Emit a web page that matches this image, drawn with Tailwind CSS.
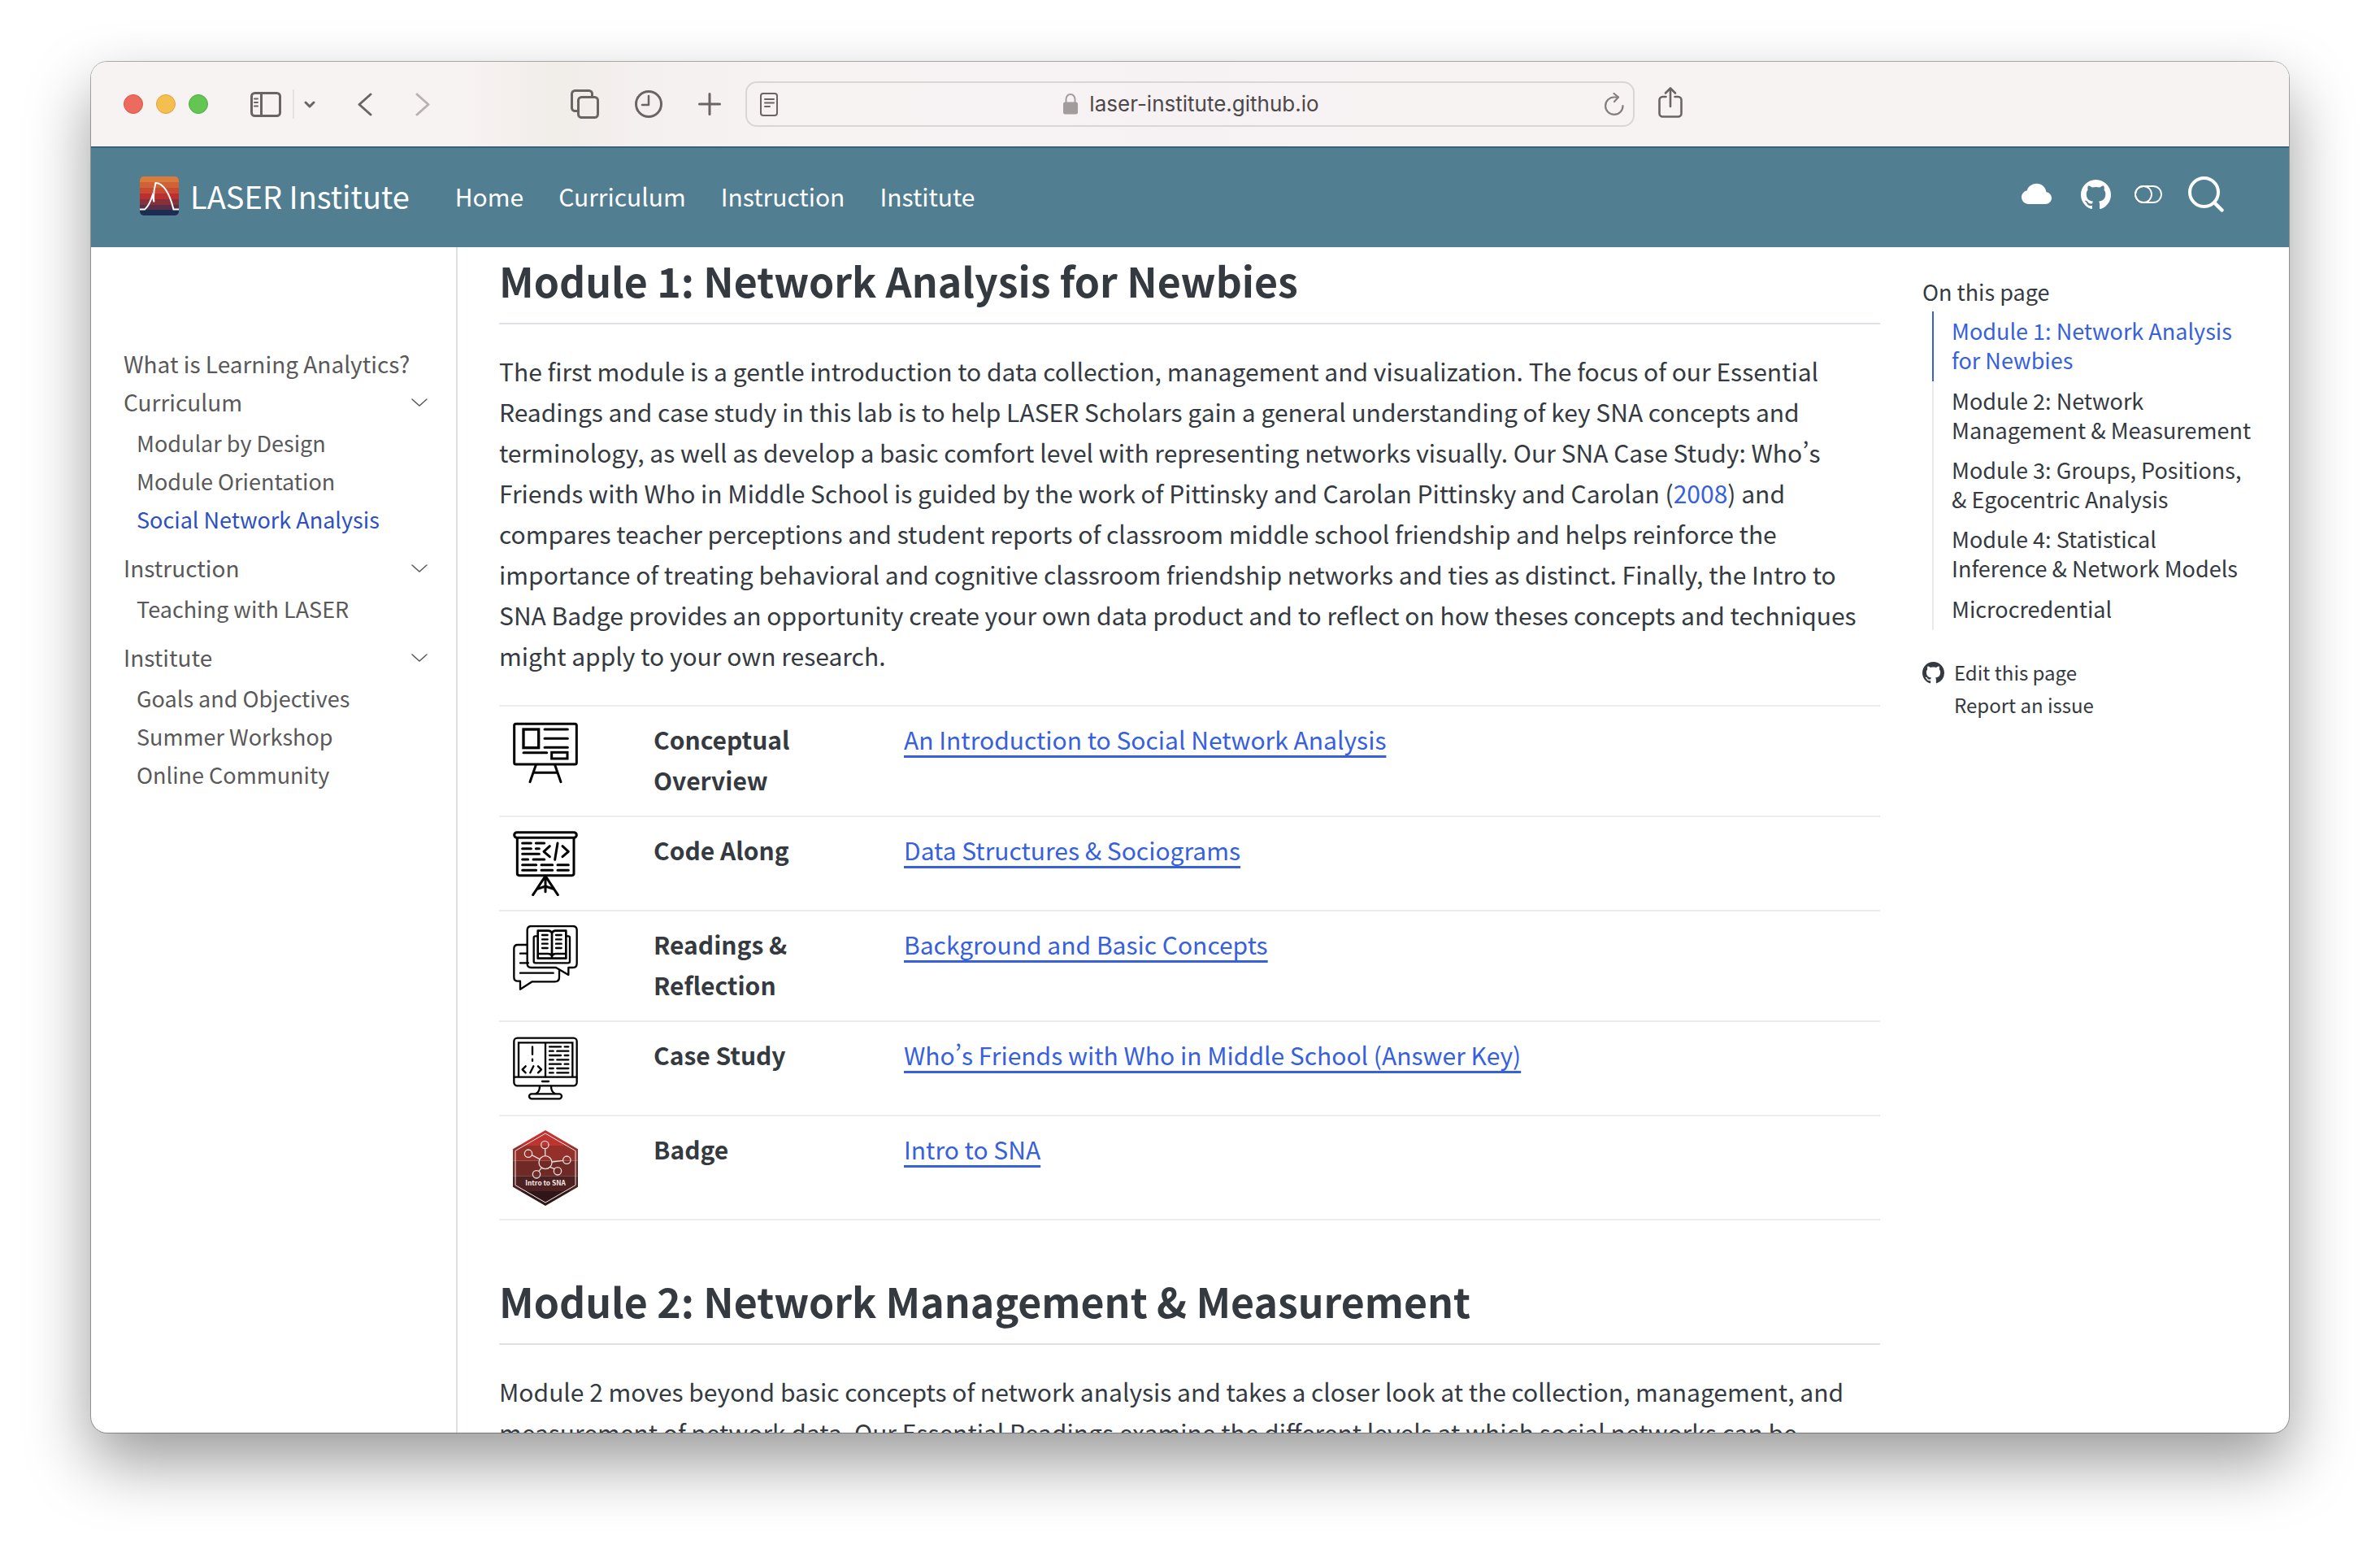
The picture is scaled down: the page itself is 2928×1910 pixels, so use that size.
<!DOCTYPE html>
<html lang="en">
<head>
<meta charset="utf-8">
<title>LASER Institute</title>
<script src="https://cdn.jsdelivr.net/npm/@tailwindcss/browser@4"></script>
</head>
<body class="bg-white font-['Noto_Sans_CJK_SC','Noto_Sans',sans-serif] text-[#343a40] [font-feature-settings:'pwid']">
<div class="flex h-screen flex-col px-28 pt-19 pb-37">
<div class="flex min-h-0 flex-1 flex-col overflow-hidden rounded-[20px] bg-white shadow-[0_0_0_1px_rgba(0,0,0,0.3),0_36px_80px_rgba(0,0,0,0.4)]">

  <!-- Browser toolbar -->
  <div class="grid h-26 shrink-0 grid-cols-[1fr_1094px_1fr] items-center bg-[#f8f3f3] bg-[linear-gradient(90deg,#f8f3f3_17%,#f1ede9_21%,#f1ede9_22%,#f5f0f0_25%,#f8f3f3_32%,#f6f1f3_50%,#f8f3f3_60%)] text-[#6b6464]">
    <div class="flex items-center justify-between pr-[30px] pl-10">
      <div class="flex items-center">
        <div class="flex gap-4">
          <button aria-label="Close" class="size-6 rounded-full border border-[#d9554b] bg-[#ed6a5e]"></button>
          <button aria-label="Minimize" class="size-6 rounded-full border border-[#dba53c] bg-[#f5bf4f]"></button>
          <button aria-label="Zoom" class="size-6 rounded-full border border-[#53ab44] bg-[#62c554]"></button>
        </div>
        <button aria-label="Sidebar" class="ml-[52px]"><svg class="block h-[31px] w-[38px]" viewBox="0 0 38 31" fill="none" stroke="currentColor" stroke-width="3"><rect x="1.5" y="1.5" width="35" height="28" rx="4"/><path d="M13.5 2v27"/><path d="M5 8.500h4M5 13h4M5 17.500h4" stroke-width="2" stroke-linecap="round"/></svg></button>
        <div class="ml-[14px] h-9 w-[2px] bg-[#e6e0e0]"></div>
        <button aria-label="Tab groups" class="ml-3"><svg class="block h-[9px] w-[14px]" viewBox="0 0 14 9" fill="none" stroke="currentColor" stroke-width="3" stroke-linecap="round" stroke-linejoin="round"><path d="M2 2l5 5 5-5"/></svg></button>
        <button aria-label="Back" class="ml-[52px]"><svg class="block h-[29px] w-[18px]" viewBox="0 0 18 29" fill="none" stroke="currentColor" stroke-width="3" stroke-linecap="round" stroke-linejoin="round"><path d="M16 2L2 14.500 16 27"/></svg></button>
        <button aria-label="Forward" class="ml-[53px] text-[#b9b2b2]"><svg class="block h-[29px] w-[18px]" viewBox="0 0 18 29" fill="none" stroke="currentColor" stroke-width="3" stroke-linecap="round" stroke-linejoin="round"><path d="M2 2l14 12.500L2 27"/></svg></button>
      </div>
      <div class="flex items-center gap-11">
        <button aria-label="Tab overview"><svg class="block h-9 w-[35px]" viewBox="0 0 35 36" fill="none" stroke="currentColor" stroke-width="3"><path d="M9 26.500H5.500a4 4 0 0 1-4-4v-17a4 4 0 0 1 4-4h17a4 4 0 0 1 4 4V9"/><rect x="9.500" y="9.500" width="24" height="25" rx="4"/></svg></button>
        <button aria-label="History"><svg class="block h-[34px] w-[34px]" viewBox="0 0 34 34" fill="none" stroke="currentColor" stroke-width="3" stroke-linecap="round" stroke-linejoin="round"><circle cx="17" cy="17" r="15.500"/><path d="M17 7v11H9" stroke-width="2.500"/></svg></button>
        <button aria-label="New tab"><svg class="block size-7" viewBox="0 0 28 28" fill="none" stroke="currentColor" stroke-width="3" stroke-linecap="round"><path d="M14 1.500v25M1.500 14h25"/></svg></button>
      </div>
    </div>
    <div class="flex h-14 items-center rounded-[14px] border-2 border-[#dbd5d5] pr-[11px] pl-4">
      <svg class="h-[29px] w-[22px]" viewBox="0 0 22 29" fill="none" stroke="currentColor" stroke-width="2"><rect x="1" y="1" width="20" height="27" rx="3"/><path d="M6 8h11M6 12.500h11M6 17h6" stroke-linecap="round"/></svg>
      <div class="flex flex-1 items-center justify-center gap-[14px]">
        <svg class="h-[26px] w-[18px]" viewBox="0 0 18 26" fill="none"><rect y="10.500" width="18" height="15" rx="2.500" fill="#a29c9d"/><path d="M3.500 11V7a5.500 6 0 0 1 11 0v4" stroke="#a29c9d" stroke-width="2"/></svg>
        <span class="font-[Inter,sans-serif] text-[26px] leading-9 text-[#4c4749]">laser-institute.github.io</span>
      </div>
      <button aria-label="Reload"><svg class="block h-7 w-6" viewBox="0 0 24 28" fill="none" stroke="#857e7f" stroke-width="2.200" stroke-linecap="round" stroke-linejoin="round"><path d="M22.500 16A10.700 10.700 0 1 1 12 5.500h5"/><path d="M11.500 1l5.500 4.500-5 5.500"/></svg></button>
    </div>
    <div class="flex pb-1 pl-[29px]">
      <button aria-label="Share"><svg class="block h-[38px] w-[30px]" viewBox="0 0 30 38" fill="none" stroke="currentColor" stroke-width="3" stroke-linecap="round" stroke-linejoin="round"><path d="M9.500 12H5.500a4 4 0 0 0-4 4v16.500a4 4 0 0 0 4 4h19a4 4 0 0 0 4-4V16a4 4 0 0 0-4-4h-4M15 24V2M9 7.500l6-6 6 6" stroke-width="2.600"/></svg></button>
    </div>
  </div>

  <!-- Site navigation -->
  <header class="flex h-31 shrink-0 items-center border-t-2 border-[#35647a] bg-[#517e91] pr-20 pb-1 pl-15 text-white">
    <a href="#" class="flex items-center gap-[14px]">
      <svg class="size-12" viewBox="0 0 48 48"><defs><clipPath id="lg"><rect width="48" height="48" rx="5"/></clipPath></defs><g clip-path="url(#lg)"><path fill="#d97b3c" d="M0 0h48v7H0z"/><path fill="#cf6237" d="M0 7h48v7H0z"/><path fill="#c64b32" d="M0 14h48v7H0z"/><path fill="#b9302e" d="M0 21h48v7H0z"/><path fill="#85303a" d="M0 28h48v7H0z"/><path fill="#573047" d="M0 35h48v6H0z"/><path fill="#1c2c52" d="M0 41h48v7H0z"/></g><path d="M0 40.500h6c5-4 7-9 9.500-17l2 8C16 20 18 14 19.500 8c9 0 17 12 22 32.500H48" fill="none" stroke="#fff" stroke-width="2"/></svg>
      <span class="text-[38px] leading-[60px]">LASER Institute</span>
    </a>
    <nav class="ml-14 flex gap-[43px] text-[30px] leading-[50px]">
      <a href="#">Home</a><a href="#">Curriculum</a><a href="#">Instruction</a><a href="#">Institute</a>
    </nav>
    <div class="ml-auto flex items-center pb-1">
      <a href="#" aria-label="Cloud"><svg class="block size-[37px]" viewBox="0 0 16 16" fill="#fff"><path d="M4.406 3.342A5.530 5.530 0 0 1 8 2c2.690 0 4.923 2 5.166 4.579C14.758 6.804 16 8.137 16 9.773 16 11.569 14.502 13 12.687 13H3.781C1.708 13 0 11.366 0 9.318c0-1.763 1.266-3.223 2.942-3.593.143-.863.698-1.723 1.464-2.383z"/></svg></a>
      <a href="#" aria-label="GitHub" class="ml-9"><svg class="block size-[37px]" viewBox="0 0 16 16" fill="#fff"><path d="M8 0C3.580 0 0 3.580 0 8c0 3.540 2.290 6.530 5.470 7.590.4.070.55-.17.55-.38 0-.19-.01-.82-.01-1.490-2.010.37-2.530-.49-2.690-.94-.09-.23-.48-.94-.82-1.130-.28-.15-.68-.52-.01-.53.63-.01 1.080.58 1.230.82.720 1.210 1.870.87 2.330.66.070-.52.28-.87.510-1.070-1.780-.2-3.640-.89-3.640-3.950 0-.87.31-1.590.82-2.150-.08-.2-.36-1.020.080-2.120 0 0 .67-.21 2.200.82.640-.18 1.320-.27 2-.27s1.360.09 2 .27c1.530-1.040 2.200-.82 2.200-.82.440 1.100.16 1.920.080 2.120.51.560.82 1.270.82 2.150 0 3.070-1.870 3.750-3.650 3.950.29.25.54.73.54 1.480 0 1.070-.01 1.930-.01 2.200 0 .21.15.46.55.38A8.010 8.010 0 0 0 16 8c0-4.420-3.580-8-8-8"/></svg></a>
      <button aria-label="Toggle dark mode" class="ml-[29px]"><svg class="block h-[22px] w-[34px]" viewBox="0 0 34 22" fill="none" stroke="#fff" stroke-width="1.800"><rect x="1" y="1" width="32" height="20" rx="10"/><circle cx="11" cy="11" r="10"/></svg></button>
      <button aria-label="Search" class="ml-8"><svg class="block size-11" viewBox="0 0 44 44" fill="none" stroke="#fff" stroke-linecap="round"><circle cx="19.500" cy="19.500" r="17.500" stroke-width="4"/><path d="M32.500 32.500l9 9" stroke-width="4.500"/></svg></button>
    </div>
  </header>

  <div class="flex min-h-0 flex-1 overflow-hidden">
    <!-- Section navigation -->
    <nav class="w-[451px] shrink-0 border-r-2 border-[#dee2e6] pt-30 pr-[35px] pl-10 text-[28px] leading-[47px] text-[#595959]">
      <a href="#" class="block">What is Learning Analytics?</a>
      <div class="flex items-center justify-between"><a href="#">Curriculum</a><button aria-label="Toggle Curriculum"><svg class="block h-3 w-5" viewBox="0 0 20 12" fill="none" stroke="#595959" stroke-width="1.500" stroke-linecap="round"><path d="M1 2l9 8 9-8"/></svg></button></div>
      <ul class="pt-[3px] pb-[13px] pl-4 text-[27px]">
        <li><a href="#">Modular by Design</a></li>
        <li><a href="#">Module Orientation</a></li>
        <li><a href="#" class="text-[#2c50c0]">Social Network Analysis</a></li>
      </ul>
      <div class="flex items-center justify-between"><a href="#">Instruction</a><button aria-label="Toggle Instruction"><svg class="block h-3 w-5" viewBox="0 0 20 12" fill="none" stroke="#595959" stroke-width="1.500" stroke-linecap="round"><path d="M1 2l9 8 9-8"/></svg></button></div>
      <ul class="pt-[3px] pb-[13px] pl-4 text-[27px]">
        <li><a href="#">Teaching with LASER</a></li>
      </ul>
      <div class="flex items-center justify-between"><a href="#">Institute</a><button aria-label="Toggle Institute"><svg class="block h-3 w-5" viewBox="0 0 20 12" fill="none" stroke="#595959" stroke-width="1.500" stroke-linecap="round"><path d="M1 2l9 8 9-8"/></svg></button></div>
      <ul class="pt-[3px] pb-[13px] pl-4 text-[27px]">
        <li><a href="#">Goals and Objectives</a></li>
        <li><a href="#">Summer Workshop</a></li>
        <li><a href="#">Online Community</a></li>
      </ul>
    </nav>

    <!-- Article -->
    <main class="min-w-0 flex-1 pl-[51px] text-[30px] leading-[50px]">
      <h2 class="border-b-2 border-[#dee2e6] pt-[5px] pb-[18px] text-[50px] leading-[70px] font-bold">Module 1: Network Analysis for Newbies</h2>
      <p class="pt-8">The first module is a gentle introduction to data collection, management and visualization. The focus of our Essential Readings and case study in this lab is to help LASER Scholars gain a general understanding of key SNA concepts and terminology, as well as develop a basic comfort level with representing networks visually. Our SNA Case Study: Who’s Friends with Who in Middle School is guided by the work of Pittinsky and Carolan Pittinsky and Carolan (<a href="#" class="text-[#3760dd]">2008</a>) and compares teacher perceptions and student reports of classroom middle school friendship and helps reinforce the importance of treating behavioral and cognitive classroom friendship networks and ties as distinct. Finally, the Intro to SNA Badge provides an opportunity create your own data product and to reflect on how theses concepts and techniques might apply to your own research.</p>
      <table class="mt-9 w-full table-fixed border-collapse border-t-2 border-[#ececee]">
        <colgroup><col class="w-[173px]"><col class="w-[308px]"><col></colgroup>
        <tbody class="align-top">
          <tr class="border-b-2 border-[#ececee]">
            <td class="py-[17px] pl-[17px]"><svg class="block size-20" viewBox="93 78 240 240" fill="none" stroke="#000" stroke-width="9" stroke-linecap="round" stroke-linejoin="round"><rect x="98" y="91" width="230" height="149" rx="6"/><rect x="132" y="111" width="56" height="68" stroke-width="10" stroke-linejoin="miter"/><path d="M210 111h85M210 145h85M210 178h85M132 197h86"/><rect x="236" y="196" width="58" height="23" stroke-linejoin="miter"/><path d="M178 242l-22 63M248 242l22 63M170 271h88"/></svg></td>
            <th scope="row" class="px-[17px] pt-[15px] pb-[19px] text-left font-bold">Conceptual Overview</th>
            <td class="px-[17px] pt-[15px]"><a href="#" class="text-[#3760dd] underline decoration-3 underline-offset-[7px]">An Introduction to Social Network Analysis</a></td>
          </tr>
          <tr class="border-b-2 border-[#ececee]">
            <td class="py-[17px] pl-[17px]"><svg class="block size-20" viewBox="93 486 240 240" fill="none" stroke="#000" stroke-width="9" stroke-linecap="round" stroke-linejoin="round"><rect x="98" y="491" width="230" height="20" rx="10"/><path d="M109 512v131q0 7 7 7h195q7 0 7-7V512"/><path d="M128 531h32M178 531h31M128 551h32M178 551h12M128 571h62M128 591h21M168 591h41M128 611h51M198 611h41M258 611h40M128 631h51M198 631h41M258 631h40M229 542l-22 20 22 19M258 531l-10 61M276 542l22 20-22 19"/><path d="M213 653v57M211 655l-44 67M215 655l44 67M183 700l30-10 30 10"/></svg></td>
            <th scope="row" class="px-[17px] pt-[15px] text-left font-bold">Code Along</th>
            <td class="px-[17px] pt-[15px]"><a href="#" class="text-[#3760dd] underline decoration-3 underline-offset-[7px]">Data Structures &amp; Sociograms</a></td>
          </tr>
          <tr class="border-b-2 border-[#ececee]">
            <td class="py-[17px] pl-[17px]"><svg class="block size-20" viewBox="93 834 240 240" fill="none" stroke="#000" stroke-width="7" stroke-linecap="round" stroke-linejoin="round"><path d="M145 906h-34q-14 0-14 14v106q0 14 14 14h9v30l44-28h84q16 0 16-16v-24M120 938h25M120 973h30M120 1010h122"/><path d="M252 990h-92q-14 0-14-14V852q0-15 15-15h153q15 0 15 15v122q0 16-15 16h-16v27l-46-27z"/><path d="M182 874h-6q-6 0-6 6v87q0 6 6 6h121q6 0 6-6v-87q0-6-6-6h-6"/><path d="M237 862q-4-8-14-8h-38v102h104V854h-38q-10 0-14 8v78M185 939h38q10 0 14 8 4-8 14-8h38M237 947v8" stroke-width="8"/><path d="M201 870h20M201 886h20M201 902h20M201 918h20M252 870h20M252 886h20M252 902h20M252 918h20"/></svg></td>
            <th scope="row" class="px-[17px] pt-[15px] pb-[19px] text-left font-bold">Readings &amp; Reflection</th>
            <td class="px-[17px] pt-[15px]"><a href="#" class="text-[#3760dd] underline decoration-3 underline-offset-[7px]">Background and Basic Concepts</a></td>
          </tr>
          <tr class="border-b-2 border-[#ececee]">
            <td class="py-[17px] pl-[17px]"><svg class="block size-20" viewBox="93 282 240 240" fill="none" stroke="#000" stroke-width="7" stroke-linecap="round" stroke-linejoin="round"><rect x="97" y="290" width="232" height="176" rx="12"/><path d="M98 434h230M201 450h24"/><path d="M114 432V307h199v125M213 308v125" stroke-linejoin="miter"/><path d="M165 322v28M165 368v6M140 394l-12 12 12 12M169 394l-12 24M186 394l12 12-12 12"/><path d="M228 322h42M284 322h14M228 338h14M256 338h42M228 354h42M284 354h14M228 370h14M256 370h42M228 386h42M284 386h14M228 402h14M256 402h42M228 418h14M256 418h42"/><path d="M192 468q0 20-14 27M234 468q0 20 14 27"/><rect x="153" y="496" width="120" height="18" rx="9"/></svg></td>
            <th scope="row" class="px-[17px] pt-[15px] text-left font-bold">Case Study</th>
            <td class="px-[17px] pt-[15px]"><a href="#" class="text-[#3760dd] underline decoration-3 underline-offset-[7px]">Who’s Friends with Who in Middle School (Answer Key)</a></td>
          </tr>
          <tr class="border-b-2 border-[#ececee]">
            <td class="pt-[17px] pb-4 pl-[17px]"><svg class="block h-[93px] w-20" viewBox="93 630 240 279"><defs><clipPath id="hex"><path d="M213 630l120 70v139l-120 70-120-70V700z"/></clipPath></defs><g clip-path="url(#hex)"><path fill="#bf3331" d="M93 630h240v57H93z"/><path fill="#933029" d="M93 687h240v56H93z"/><path fill="#6f2a26" d="M93 743h240v56H93z"/><path fill="#4d2021" d="M93 799h240v56H93z"/><path fill="#2f1719" d="M93 855h240v54H93z"/></g><path d="M213 642l111 64v127l-111 64-111-64V706z" fill="none" stroke="#f5e9e8" stroke-width="3"/><g fill="none" stroke="#f0dedd" stroke-width="4"><circle cx="213" cy="749" r="24"/><circle cx="211" cy="684" r="14"/><circle cx="150" cy="716" r="14"/><circle cx="292" cy="740" r="14"/><circle cx="258" cy="781" r="14"/><circle cx="180" cy="793" r="14"/><path d="M212 698v27M163 722l29 15M237 747l41-5M230 766l17 7M199 769l-11 13"/></g><text x="213" y="834" text-anchor="middle" font-size="25" font-weight="700" fill="#f5e9e8" font-family="Noto Sans CJK SC, sans-serif">Intro to SNA</text></svg></td>
            <th scope="row" class="px-[17px] pt-[15px] text-left font-bold">Badge</th>
            <td class="px-[17px] pt-[15px]"><a href="#" class="text-[#3760dd] underline decoration-3 underline-offset-[7px]">Intro to SNA</a></td>
          </tr>
        </tbody>
      </table>
      <h2 class="mt-[63px] border-b-2 border-[#dee2e6] pb-[18px] text-[50px] leading-[70px] font-bold">Module 2: Network Management &amp; Measurement</h2>
      <p class="pt-8">Module 2 moves beyond basic concepts of network analysis and takes a closer look at the collection, management, and measurement of network data. Our Essential Readings examine the different levels at which social networks can be</p>
    </main>

    <!-- Table of contents -->
    <aside class="w-[503px] shrink-0 pt-[37px] pl-[52px] text-[27px] leading-9">
      <h2>On this page</h2>
      <ul class="ml-3 w-[396px] pt-[6px]">
        <li class="border-l-2 border-[#3760dd] pt-[6px] pb-2 pl-[22px] text-[#3760dd]"><a href="#">Module 1: Network Analysis for Newbies</a></li>
        <li class="border-l-2 border-[#e9eaf0] pt-[6px] pb-2 pl-[22px]"><a href="#">Module 2: Network Management &amp; Measurement</a></li>
        <li class="border-l-2 border-[#e9eaf0] pt-[5px] pb-2 pl-[22px]"><a href="#">Module 3: Groups, Positions, &amp; Egocentric Analysis</a></li>
        <li class="border-l-2 border-[#e9eaf0] pt-[5px] pb-2 pl-[22px]"><a href="#">Module 4: Statistical Inference &amp; Network Models</a></li>
        <li class="border-l-2 border-[#e9eaf0] pt-[6px] pb-2 pl-[22px]"><a href="#">Microcredential</a></li>
      </ul>
      <ul class="pt-8 text-[24px] leading-10">
        <li><a href="#" class="flex items-center gap-3"><svg class="block size-[27px]" viewBox="0 0 16 16" fill="#343a40"><path d="M8 0C3.580 0 0 3.580 0 8c0 3.540 2.290 6.530 5.470 7.590.4.070.55-.17.55-.38 0-.19-.01-.82-.01-1.490-2.010.37-2.530-.49-2.690-.94-.09-.23-.48-.94-.82-1.130-.28-.15-.68-.52-.01-.53.63-.01 1.080.58 1.230.82.720 1.210 1.870.87 2.330.66.070-.52.28-.87.510-1.070-1.780-.2-3.640-.89-3.640-3.950 0-.87.31-1.590.82-2.150-.08-.2-.36-1.020.080-2.120 0 0 .67-.21 2.200.82.640-.18 1.320-.27 2-.27s1.360.09 2 .27c1.530-1.040 2.200-.82 2.200-.82.440 1.100.16 1.920.080 2.120.51.560.82 1.270.82 2.150 0 3.070-1.870 3.750-3.650 3.950.29.25.54.73.54 1.480 0 1.070-.01 1.930-.01 2.200 0 .21.15.46.55.38A8.010 8.010 0 0 0 16 8c0-4.420-3.580-8-8-8"/></svg>Edit this page</a></li>
        <li class="pl-[39px]"><a href="#">Report an issue</a></li>
      </ul>
    </aside>
  </div>
</div>
</div>
</body>
</html>
